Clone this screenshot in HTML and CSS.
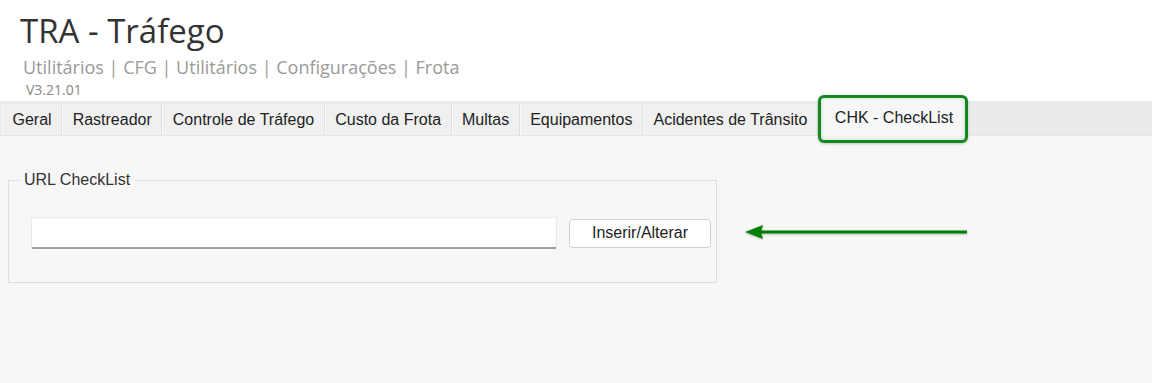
FILE: index.html
```html
<!DOCTYPE html>
<html lang="pt-BR">

<head>
    <meta charset="UTF-8">
    <title>TRA - Tráfego</title>
    <link rel="stylesheet" href="styles.css">
</head>

<body>
    <div class="header">
        <h1>TRA - Tráfego</h1>
        <div class="crumbs">Utilitários | CFG | Utilitários | Configurações | Frota</div>
        <div class="version">V3.21.01</div>
    </div>

    <div class="tabs">
        <div class="tab">Geral</div>
        <div class="tab">Rastreador</div>
        <div class="tab">Controle de Tráfego</div>
        <div class="tab">Custo da Frota</div>
        <div class="tab">Multas</div>
        <div class="tab">Equipamentos</div>
        <div class="tab">Acidentes de Trânsito</div>
        <div class="tab active">CHK - CheckList</div>
    </div>

    <div class="content">
        <fieldset class="group">
            <legend>URL CheckList</legend>
            <div class="row">
                <input type="text" class="url-input">
                <button class="btn">Inserir/Alterar</button>
            </div>
        </fieldset>

        <div class="pointer">
            <svg width="228" height="20" viewBox="0 0 228 20">
                <line x1="14" y1="10" x2="223" y2="10" stroke="#008000" stroke-width="3" />
                <polygon points="1,10 19,3 17,10 19,17" fill="#008000" />
            </svg>
        </div>
    </div>
</body>

</html>
```

FILE: styles.css
```css
body,
html {
    margin: 0;
    background: #f7f7f7;
    font-family: "Liberation Sans", Arial, sans-serif;
}

.header {
    background: #fff;
    padding: 9px 0 0 20px;
    height: 101px;
    box-sizing: border-box;
}

h1 {
    font-family: "Open Sans", sans-serif;
    font-weight: 400;
    font-size: 33px;
    color: #333;
    margin: 0;
    line-height: 44px;
}

.crumbs {
    font-family: "Open Sans", sans-serif;
    font-size: 18px;
    color: #9a9a9a;
    margin: 2px 0 0 3px;
    line-height: 24px;
}

.version {
    font-family: "Open Sans", sans-serif;
    font-size: 14px;
    color: #888;
    margin: 2px 0 0 6px;
    line-height: 18px;
}

.tabs {
    display: flex;
    align-items: stretch;
    background: #ebebeb;
    padding: 3px 0 0 2px;
    height: 31px;
    border-bottom: 1px solid #e6e6e6;
}

.tab {
    background: #f0f0f0;
    border-right: 1px solid #e0e0e0;
    border-left: 1px solid #fafafa;
    font-size: 16px;
    color: #222;
    padding: 0 9.5px;
    display: flex;
    align-items: center;
}

.tab.active {
    position: relative;
    background: #f7f7f7;
    border: 3px solid #0f8a1c;
    border-radius: 6px;
    margin: -9px 0 -8px 0;
    padding: 0 12px 2px 14px;
    box-shadow: inset 0 0 4px rgba(0, 0, 0, 0.15), 0 1px 3px rgba(0, 0, 0, 0.2);
}

.content {
    display: flex;
    align-items: flex-start;
    padding: 35px 0 0 8px;
}

.group {
    box-sizing: border-box;
    width: 709px;
    margin: 0;
    padding: 0 0 33px 10px;
    border: 1px solid #dcdcdc;
}

legend {
    font-size: 16px;
    line-height: 18px;
    color: #333;
    padding: 0 5px;
}

.row {
    display: flex;
    align-items: center;
    margin: 28px 0 0 12px;
}

.url-input {
    width: 526px;
    height: 32px;
    box-sizing: border-box;
    border: 1px solid #e8e8e8;
    border-bottom: 2px solid #a0a0a0;
    border-radius: 2px;
    background: #fff;
}

.btn {
    margin-left: 12px;
    width: 142px;
    height: 29px;
    background: #fff;
    border: 1px solid #cfcfcf;
    border-radius: 4px;
    font-family: "Liberation Sans", Arial, sans-serif;
    font-size: 16px;
    color: #222;
}

.pointer {
    margin: 51px 0 0 27px;
    filter: drop-shadow(0 1px 1px rgba(0, 0, 0, 0.25));
}

.pointer svg {
    display: block;
}
```
